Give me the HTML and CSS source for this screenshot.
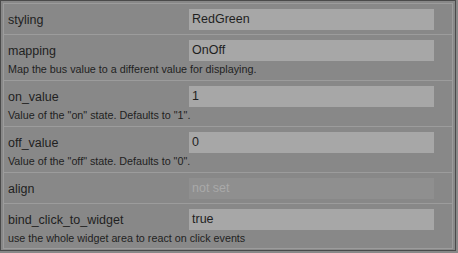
FILE: index.html
```html
<!DOCTYPE html>
<html>
<head>
<meta charset="utf-8">
<link rel="stylesheet" href="styles.css">
</head>
<body>
<div class="frame">
  <div class="panel">
    <div class="row">
      <div class="line"><span class="label">styling</span><span class="input">RedGreen</span></div>
    </div>
    <div class="row">
      <div class="line"><span class="label">mapping</span><span class="input">OnOff</span></div>
      <div class="desc">Map the bus value to a different value for displaying.</div>
    </div>
    <div class="row">
      <div class="line"><span class="label">on_value</span><span class="input">1</span></div>
      <div class="desc">Value of the "on" state. Defaults to "1".</div>
    </div>
    <div class="row">
      <div class="line"><span class="label">off_value</span><span class="input">0</span></div>
      <div class="desc">Value of the "off" state. Defaults to "0".</div>
    </div>
    <div class="row">
      <div class="line"><span class="label">align</span><span class="input empty">not set</span></div>
    </div>
    <div class="row">
      <div class="line"><span class="label">bind_click_to_widget</span><span class="input">true</span></div>
      <div class="desc">use the whole widget area to react on click events</div>
    </div>
  </div>
</div>
</body>
</html>
```

FILE: styles.css
```css
html, body {
  margin: 0;
  padding: 0;
  background: #888888;
}
body {
  width: 458px;
  height: 253px;
  overflow: hidden;
  font-family: "Liberation Sans", Arial, sans-serif;
  color: #1f1f1f;
}
.frame {
  width: 456px;
  height: 251px;
  border: 1px solid #4a4a4a;
  padding: 2px;
  box-sizing: border-box;
  background: #888888;
}
.panel {
  border: 1px solid #9c9c9c;
  height: 246px;
  box-sizing: border-box;
}
.row {
  padding: 5px 18px 4px 4px;
  border-top: 1px solid #9c9c9c;
}
.row:first-child {
  border-top: none;
}
.line {
  display: flex;
  align-items: center;
  height: 21px;
}
.label {
  width: 181px;
  flex: none;
  font-size: 12.5px;
}
.input {
  flex: 1;
  height: 21px;
  line-height: 21px;
  background: #a7a7a7;
  padding-left: 3px;
  font-size: 12.5px;
}
.input.empty {
  background: #8f8f8f;
  color: #a9a9a9;
}
.desc {
  font-size: 10.75px;
  line-height: 14px;
  margin-top: 1px;
}
```
